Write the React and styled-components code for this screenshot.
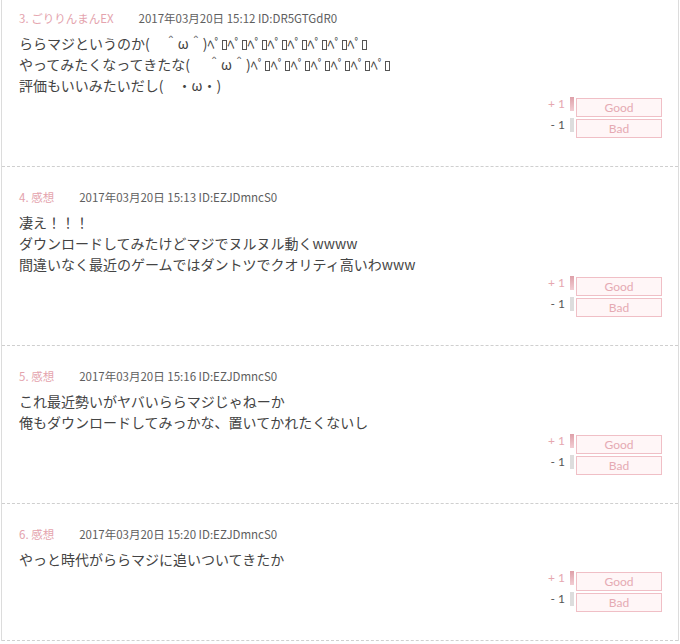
import styled, { createGlobalStyle } from "styled-components";

const posts = [
  {
    no: 3,
    name: "ごりりんまんEX",
    date: "2017年03月20日 15:12",
    id: "DR5GTGdR0",
    lines: [
      { text: "ららマジというのか(　＾ω＾)", marks: 8 },
      { text: "やってみたくなってきたな(　 ＾ω＾)", marks: 7 },
      { text: "評価もいいみたいだし(　・ω・)" },
    ],
  },
  {
    no: 4,
    name: "感想",
    date: "2017年03月20日 15:13",
    id: "EZJDmncS0",
    lines: [
      { text: "凄え！！！" },
      { text: "ダウンロードしてみたけどマジでヌルヌル動くwwww" },
      { text: "間違いなく最近のゲームではダントツでクオリティ高いわwww" },
    ],
  },
  {
    no: 5,
    name: "感想",
    date: "2017年03月20日 15:16",
    id: "EZJDmncS0",
    lines: [
      { text: "これ最近勢いがヤバいららマジじゃねーか" },
      { text: "俺もダウンロードしてみっかな、置いてかれたくないし" },
    ],
  },
  {
    no: 6,
    name: "感想",
    date: "2017年03月20日 15:20",
    id: "EZJDmncS0",
    lines: [{ text: "やっと時代がららマジに追いついてきたか" }],
  },
];

export default function App() {
  return (
    <>
      <GlobalStyle />
      <Page>
        <List>
          {posts.map((p) => (
            <Post key={p.no} post={p} />
          ))}
        </List>
      </Page>
    </>
  );
}

function Post({ post }) {
  return (
    <PostBox>
      <Header>
        <Name>
          {post.no}. {post.name}
        </Name>
        <Meta>
          {post.date} ID:{post.id}
        </Meta>
      </Header>
      <Body>
        {post.lines.map((line, i) => (
          <Line key={i}>
            {line.text}
            {Array.from({ length: line.marks || 0 }).map((_, j) => (
              <span key={j}>
                ﾍﾟ
                <Tofu />
              </span>
            ))}
          </Line>
        ))}
      </Body>
      <Votes>
        <VoteRow>
          <Count $good>+ 1</Count>
          <Gauge $good />
          <VoteButton>Good</VoteButton>
        </VoteRow>
        <VoteRow>
          <Count>- 1</Count>
          <Gauge />
          <VoteButton>Bad</VoteButton>
        </VoteRow>
      </Votes>
    </PostBox>
  );
}

const GlobalStyle = createGlobalStyle`
  body {
    margin: 0;
    background: #ffffff;
    font-family: "Noto Sans CJK JP", "Noto Sans", sans-serif;
  }
`;

const Page = styled.div`
  padding: 0 1px;
`;

const List = styled.div`
  border-left: 1px solid #dcdcdc;
  border-right: 1px solid #dcdcdc;
`;

const PostBox = styled.div`
  padding: 21px 16px 28px 17px;
  border-bottom: 1px dashed #cfcfcf;

  &:first-child {
    padding-top: 9px;
  }
`;

const Header = styled.div`
  display: flex;
  align-items: center;
  height: 18px;
  font-size: 11.5px;
  line-height: 18px;
  margin-bottom: 6px;
`;

const Name = styled.span`
  color: #e4a3ad;
  margin-right: 25px;
`;

const Meta = styled.span`
  color: #5e5e5e;
`;

const Body = styled.div`
  font-size: 14px;
  line-height: 21px;
  color: #444444;
  white-space: nowrap;
`;

const Line = styled.div``;

const Tofu = styled.span`
  display: inline-block;
  box-sizing: border-box;
  width: 5px;
  height: 10px;
  margin: 0 0.5px;
  border: 1px solid #555555;
  vertical-align: -1px;
`;

const Votes = styled.div`
  display: flex;
  flex-direction: column;
  align-items: flex-end;
  gap: 2px;
  margin-top: 2px;
`;

const VoteRow = styled.div`
  display: flex;
  align-items: flex-start;
`;

const Count = styled.span`
  font-family: Lato, "Open Sans", sans-serif;
  font-size: 12px;
  line-height: 14px;
  margin-top: -1px;
  margin-right: 5px;
  white-space: pre;
  color: ${(p) => (p.$good ? "#e6a7b0" : "#555555")};
`;

const Gauge = styled.span`
  width: 4px;
  height: 14px;
  margin-top: -1px;
  margin-right: 2px;
  background: ${(p) =>
    p.$good ? "linear-gradient(#dea0a9, #f2cdd3)" : "#dddddd"};
`;

const VoteButton = styled.button`
  box-sizing: border-box;
  width: 86px;
  height: 19px;
  padding: 0;
  border: 1px solid #f0bfc6;
  background: #fff6f7;
  color: #e5aab3;
  font-family: Lato, "Open Sans", sans-serif;
  font-size: 12px;
  line-height: 17px;
  text-align: center;
  cursor: pointer;
`;
